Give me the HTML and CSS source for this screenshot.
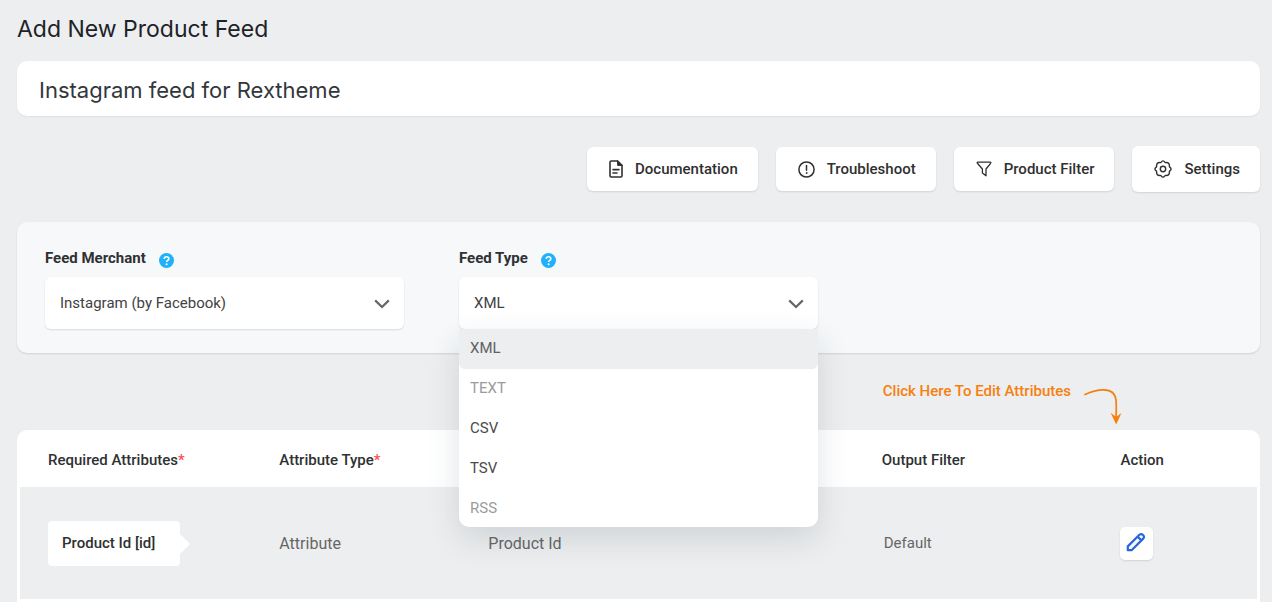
FILE: index.html
```html
<!DOCTYPE html>
<html lang="en">
<head>
<meta charset="utf-8">
<title>Add New Product Feed</title>
<link rel="stylesheet" href="styles.css">
</head>
<body>
<main class="page">
  <h1 class="page-title">Add New Product Feed</h1>
  <input class="feed-title" type="text" aria-label="Feed title" value="Instagram feed for Rextheme">

  <nav class="toolbar" aria-label="Feed tools">
    <button class="tool" type="button">
      <svg width="14" height="18" viewBox="0 0 14 18" fill="none" stroke="currentColor" stroke-width="1.6" stroke-linejoin="round" stroke-linecap="round"><path d="M1 2.2Q1 1 2.2 1H8.6L13 5.4V15.8Q13 17 11.8 17H2.2Q1 17 1 15.8Z"/><path d="M8.6 1V5.4H13Z" fill="currentColor" stroke-width="1"/><path d="M4 9.6H10M4 13H8"/></svg>
      Documentation
    </button>
    <button class="tool" type="button">
      <svg width="17" height="17" viewBox="0 0 17 17" fill="none" stroke="currentColor" stroke-width="1.5" stroke-linecap="round"><circle cx="8.5" cy="8.5" r="7.6"/><path d="M8.5 4.6V9.2"/><circle cx="8.5" cy="12" r=".5" fill="currentColor" stroke-width=".8"/></svg>
      Troubleshoot
    </button>
    <button class="tool" type="button">
      <svg width="16" height="16" viewBox="0 0 16 16" fill="none" stroke="currentColor" stroke-width="1.3" stroke-linejoin="round"><path d="M1.8 1.2H14.2Q15.2 1.3 14.6 2.3L10 8V14.8L6.4 12V8L1.4 2.3Q.8 1.3 1.8 1.2Z"/></svg>
      Product Filter
    </button>
    <button class="tool tool-large" type="button">
      <svg width="18" height="18" viewBox="0 0 18 18" fill="none" stroke="currentColor" stroke-width="1.4" stroke-linejoin="round"><path d="M7.1 2.2Q9 -.4 10.9 2.2Q11.3 2.7 12 2.6Q15.5 2.2 15.4 6Q15.3 6.7 15.8 7.1Q18.4 9 15.8 10.9Q15.3 11.3 15.4 12Q15.5 15.8 12 15.4Q11.3 15.3 10.9 15.8Q9 18.4 7.1 15.8Q6.7 15.3 6 15.4Q2.5 15.8 2.6 12Q2.7 11.3 2.2 10.9Q-.4 9 2.2 7.1Q2.7 6.7 2.6 6Q2.5 2.2 6 2.6Q6.7 2.7 7.1 2.2Z"/><circle cx="9" cy="9" r="2.7"/></svg>
      Settings
    </button>
  </nav>

  <section class="config">
    <div class="field">
      <div class="field-head">
        <label for="merchant">Feed Merchant</label>
        <svg width="15" height="15" viewBox="0 0 15 15" aria-hidden="true"><circle cx="7.5" cy="7.5" r="7.5" fill="#1fb2fb"/><path d="M5.2 5.8Q5.4 3.7 7.5 3.7Q9.8 3.7 9.8 5.7Q9.8 6.8 8.7 7.4Q7.6 8 7.6 9" fill="none" stroke="#fff" stroke-width="1.6"/><circle cx="7.6" cy="11.3" r="1" fill="#fff"/></svg>
      </div>
      <div class="select-box">
        <select id="merchant"><option>Instagram (by Facebook)</option></select>
        <svg class="chevron" width="16" height="10" viewBox="0 0 16 10" fill="none" stroke="#666" stroke-width="2.2"><path d="M1.2 1.4L8 8L14.8 1.4"/></svg>
      </div>
    </div>
    <div class="field">
      <div class="field-head">
        <label for="type">Feed Type</label>
        <svg width="15" height="15" viewBox="0 0 15 15" aria-hidden="true"><circle cx="7.5" cy="7.5" r="7.5" fill="#1fb2fb"/><path d="M5.2 5.8Q5.4 3.7 7.5 3.7Q9.8 3.7 9.8 5.7Q9.8 6.8 8.7 7.4Q7.6 8 7.6 9" fill="none" stroke="#fff" stroke-width="1.6"/><circle cx="7.6" cy="11.3" r="1" fill="#fff"/></svg>
      </div>
      <div class="select-box">
        <select id="type"><option>XML</option></select>
        <svg class="chevron" width="16" height="10" viewBox="0 0 16 10" fill="none" stroke="#666" stroke-width="2.2"><path d="M1.2 1.4L8 8L14.8 1.4"/></svg>
        <ul class="menu" role="listbox" aria-label="Feed Type">
          <li class="selected" role="option" aria-selected="true">XML</li>
          <li class="disabled" role="option" aria-disabled="true">TEXT</li>
          <li role="option">CSV</li>
          <li role="option">TSV</li>
          <li class="disabled" role="option" aria-disabled="true">RSS</li>
        </ul>
      </div>
    </div>
  </section>

  <div class="hint">
    <span>Click Here To Edit Attributes</span>
    <svg class="hint-arrow" width="38" height="38" viewBox="0 0 38 38" fill="none" stroke="#f77f0e" stroke-linecap="round" aria-hidden="true"><path d="M1 6.5Q11 1.6 20 1.8Q31 2 32 12Q32.6 18 32 30" stroke-width="1.7"/><path d="M32.2 36.5L26.6 24.7L32.2 29L37.4 24.9Z" fill="#f77f0e" stroke="none"/></svg>
  </div>

  <div class="attributes">
    <table>
      <thead>
        <tr>
          <th class="col-name">Required Attributes<span class="star">*</span></th>
          <th class="col-type">Attribute Type<span class="star">*</span></th>
          <th class="col-value"></th>
          <th class="col-filter">Output Filter</th>
          <th>Action</th>
        </tr>
      </thead>
      <tbody>
        <tr>
          <td><span class="tag">Product Id [id]</span></td>
          <td>Attribute</td>
          <td>Product Id</td>
          <td class="filter">Default</td>
          <td>
            <button class="edit" type="button" aria-label="Edit attribute">
              <svg width="20" height="20" viewBox="0 0 20 20" fill="none" stroke="#2468dc" stroke-width="2.2" stroke-linejoin="round"><path d="M1.8 18.2V14.4L13.4 2.8Q15.2 1.2 17 3Q18.8 4.8 17.2 6.6L5.6 18.2Z"/><path d="M11.6 4.6L15.4 8.4"/></svg>
            </button>
          </td>
        </tr>
      </tbody>
    </table>
  </div>
</main>
</body>
</html>
```
FILE: styles.css
```css
* {
  box-sizing: border-box;
}

body {
  margin: 0;
  background: #edeeef;
  color: #2f3133;
  font-family: Roboto, "Liberation Sans", sans-serif;
  font-size: 15px;
}

button, input, select {
  font: inherit;
  color: inherit;
  border: 0;
  margin: 0;
}

svg {
  display: block;
  flex: none;
}

.page {
  padding: 13px 12px 0 17px;
}

.page-title {
  margin: 0 0 16px;
  color: #1d2327;
  font: 400 23px/32px Inter, sans-serif;
}

.feed-title {
  display: block;
  width: 100%;
  height: 55px;
  padding: 2px 22px 0;
  border-radius: 10px;
  background: #fff;
  color: #32373c;
  font: 400 22px/32px Inter, sans-serif;
  box-shadow: 0 1px 2px rgba(0, 0, 0, .06);
}

.toolbar {
  display: flex;
  justify-content: flex-end;
  align-items: center;
  gap: 18px;
  margin: 30px 0;
}

.tool {
  display: flex;
  align-items: center;
  gap: 12px;
  height: 44px;
  padding: 0 20px 0 22px;
  border-radius: 6px;
  background: #fff;
  color: #303030;
  font-weight: 500;
  box-shadow: 0 1px 2px rgba(0, 0, 0, .12);
}

.tool-large {
  height: 46px;
}

.config {
  display: flex;
  gap: 55px;
  padding: 26px 28px 24px;
  border-radius: 10px;
  background: #f6f8fa;
  box-shadow: 0 1px 2px rgba(0, 0, 0, .12);
}

.field {
  flex: 0 1 359px;
}

.field-head {
  display: flex;
  align-items: flex-end;
  gap: 13px;
  height: 20px;
  margin-bottom: 9px;
  font-weight: 700;
  line-height: 20px;
}

.select-box {
  position: relative;
}

.select-box select {
  display: block;
  width: 100%;
  height: 52px;
  padding: 0 15px;
  border-radius: 6px;
  appearance: none;
  background: #fff;
  color: #424242;
  box-shadow: 0 1px 2px rgba(0, 0, 0, .12);
}

.chevron {
  position: absolute;
  top: 22px;
  right: 14px;
  pointer-events: none;
}

.menu {
  position: absolute;
  top: 100%;
  left: 0;
  right: 0;
  z-index: 1;
  margin: 0;
  padding: 0;
  list-style: none;
  border-radius: 0 0 10px 10px;
  background: #fff;
  color: #4a4a4a;
  box-shadow: 0 12px 32px rgba(30, 60, 80, .14);
}

.menu li {
  padding: 7px 11px 9px;
  line-height: 24px;
}

.menu li:last-child {
  padding-bottom: 7px;
}

.menu .selected {
  border-radius: 0 0 6px 6px;
  background: #edeeef;
  color: #616161;
}

.menu .disabled {
  color: #9b9b9b;
}

.hint {
  display: flex;
  justify-content: flex-end;
  gap: 13px;
  margin: 28px 138px 4px 0;
  color: #f77f0e;
  font-weight: 500;
  line-height: 20px;
}

.hint-arrow {
  margin-top: 7px;
}

.attributes {
  padding: 0 3px 3px;
  border-radius: 10px 10px 0 0;
  background: #fff;
}

table {
  width: 100%;
  border-collapse: collapse;
  table-layout: fixed;
}

th, td {
  padding: 0 0 0 28px;
  text-align: left;
}

th {
  height: 57px;
  padding-top: 2px;
  font-weight: 500;
}

td {
  height: 112px;
  background: #edeeef;
  color: #666;
  font-size: 16px;
}

.col-name { width: 18.7%; }
.col-type { width: 16.9%; }
.col-value { width: 31.8%; }
.col-filter { width: 19.3%; }

.star {
  color: #ff4d4f;
}

.filter {
  padding-left: 30px;
  font-size: 15px;
}

.tag {
  position: relative;
  display: inline-block;
  padding: 0 25px 0 14px;
  border-radius: 4px;
  background: #fff;
  color: #303030;
  font-size: 15px;
  font-weight: 500;
  line-height: 45px;
}

.tag::after {
  content: "";
  position: absolute;
  top: 13px;
  left: 100%;
  border: 10px solid transparent;
  border-left-color: #fff;
  border-right-width: 0;
}

.edit {
  display: grid;
  place-items: center;
  width: 33px;
  height: 33px;
  padding: 0 2px 2px 0;
  border-radius: 5px;
  background: #fff;
  box-shadow: 0 1px 2px rgba(0, 0, 0, .12);
}
```
